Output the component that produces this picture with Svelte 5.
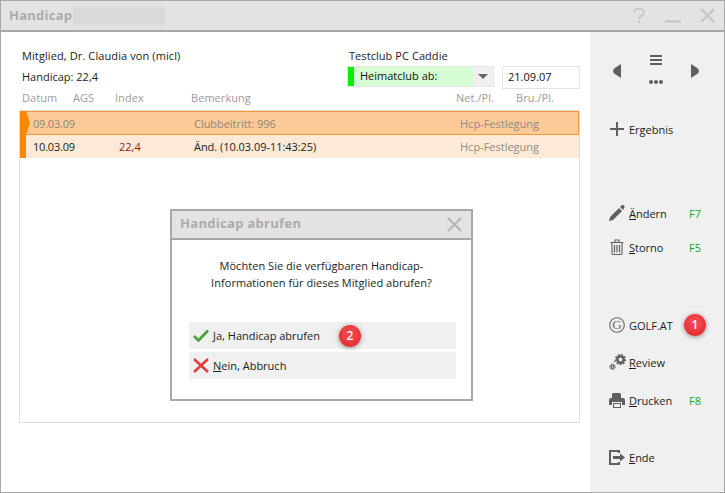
<script>
  const rows = [
    { date: '09.03.09', index: '', note: 'Clubbeitritt: 996', kind: 'Hcp-Festlegung', selected: true },
    { date: '10.03.09', index: '22,4', note: 'Änd. (10.03.09-11:43:25)', kind: 'Hcp-Festlegung', selected: false }
  ];
</script>

<div class="window">
  <header class="titlebar">
    <span class="title">Handicap</span>
    <span class="blur"></span>
    <span class="controls">
      <svg width="12" height="15" viewBox="0 0 12 15"><path d="M1 4.500C1 2.300 3 1 6 1s5 1.500 5 3.500c0 1.800-1 2.500-2.500 3.500C7 9 6 9.700 6 11.500" fill="none" stroke="#c4c4c4" stroke-width="1.700"/><rect x="4.900" y="12.800" width="2.300" height="2.200" fill="#c4c4c4"/></svg>
      <svg width="16" height="15" viewBox="0 0 16 15"><rect x="0" y="12.500" width="16" height="2" fill="#c4c4c4"/></svg>
      <svg width="15" height="15" viewBox="0 0 15 15"><path d="M1 1l13 13M14 1L1 14" stroke="#c4c4c4" stroke-width="2" fill="none"/></svg>
    </span>
  </header>

  <div class="body">
    <main class="content">
      <div class="info">
        <div class="member">
          <p class="name">Mitglied, Dr. Claudia von (micl)</p>
          <p>Handicap: 22,4</p>
        </div>
        <div class="club">
          <p class="club-name">Testclub PC Caddie</p>
          <div class="club-row">
            <div class="select">
              <span class="marker"></span>
              <span class="select-value">Heimatclub ab:</span>
              <span class="select-btn"><svg width="10" height="5" viewBox="0 0 10 5"><path d="M0 0h10L5 5z" fill="#666"/></svg></span>
            </div>
            <div class="date-input">21.09.07</div>
          </div>
        </div>
      </div>

      <div class="cols">
        <span class="c-date">Datum</span>
        <span class="c-ags">AGS</span>
        <span class="c-index">Index</span>
        <span class="c-note">Bemerkung</span>
        <span class="c-net">Net./Pl.</span>
        <span class="c-bru">Bru./Pl.</span>
      </div>

      <div class="table">
        {#each rows as r}
          <div class="row" class:selected={r.selected}>
            <span class="flag"></span>
            <span class="r-date">{r.date}</span>
            <span class="r-index">{r.index}</span>
            <span class="r-note">{r.note}</span>
            <span class="r-kind">{r.kind}</span>
          </div>
        {/each}
      </div>
    </main>

    <aside class="side">
      <div class="nav">
        <svg width="8" height="14" viewBox="0 0 8 14"><path d="M8 0v14L1 9.500 0 7l1-2.500z" fill="#5f5f5f"/></svg>
        <span class="menu">
          <svg width="12" height="10" viewBox="0 0 12 10"><path d="M0 0h12v2H0zM0 4h12v2H0zM0 8h12v2H0z" fill="#5f5f5f"/></svg>
          <svg width="14" height="4" viewBox="0 0 14 4"><circle cx="2" cy="2" r="2" fill="#5f5f5f"/><circle cx="7" cy="2" r="2" fill="#5f5f5f"/><circle cx="12" cy="2" r="2" fill="#5f5f5f"/></svg>
        </span>
        <svg width="8" height="14" viewBox="0 0 8 14"><path d="M0 0v14L7 9.500 8 7 7 4.500z" fill="#5f5f5f"/></svg>
      </div>

      <div class="action a-ergebnis">
        <span class="ico"><svg width="14" height="14" viewBox="0 0 14 14"><path d="M6 0h2v6h6v2H8v6H6V8H0V6h6z" fill="#5f5f5f"/></svg></span>
        <span class="lbl">Ergebnis</span>
      </div>

      <div class="action a-aendern">
        <span class="ico"><svg width="16" height="16" viewBox="0 0 16 16"><path d="M0 16l1-4L10 3l3 3-9 9zM11 2l1.500-1.500a1.500 1.500 0 0 1 2.500 2.500L14 5z" fill="#5f5f5f"/></svg></span>
        <span class="lbl"><u>Ä</u>ndern</span><span class="key">F7</span>
      </div>
      <div class="action a-storno">
        <span class="ico"><svg width="14" height="16" viewBox="0 0 14 16"><path d="M0.500 3.500h13M5 3V1h4v2M2 4v10.500l.8 1h8.400l.8-1V4" fill="none" stroke="#5f5f5f" stroke-width="1.100"/><path d="M4.500 6v7.500M7 6v7.500M9.500 6v7.500" fill="none" stroke="#5f5f5f" stroke-width="1.200"/></svg></span>
        <span class="lbl"><u>S</u>torno</span><span class="key">F5</span>
      </div>

      <div class="action a-golf">
        <span class="ico"><svg width="16" height="16" viewBox="0 0 16 16"><circle cx="8" cy="8" r="7.300" fill="none" stroke="#6a6a6a" stroke-width="1.100"/><text x="8" y="12" text-anchor="middle" class="g">G</text></svg></span>
        <span class="lbl">GOLF.AT</span>
        <span class="badge b1">1</span>
      </div>
      <div class="action a-review">
        <span class="ico"><svg width="17" height="16" viewBox="0 0 17 16"><circle cx="11.500" cy="5.500" r="3.200" fill="none" stroke="#5f5f5f" stroke-width="2.600"/><circle cx="11.500" cy="5.500" r="5" fill="none" stroke="#5f5f5f" stroke-width="1.400" stroke-dasharray="1.700 1.700"/><circle cx="3.500" cy="12.800" r="1.600" fill="none" stroke="#5f5f5f" stroke-width="1.400"/><circle cx="3.500" cy="12.800" r="2.800" fill="none" stroke="#5f5f5f" stroke-width="1" stroke-dasharray="1.100 1.100"/><circle cx="5.500" cy="7.500" r=".8" fill="#5f5f5f"/></svg></span>
        <span class="lbl"><u>R</u>eview</span>
      </div>
      <div class="action a-drucken">
        <span class="ico"><svg width="16" height="15" viewBox="0 0 16 15"><path d="M4 0h7l1 1v4H3V1zM2 5h12a2 2 0 0 1 2 2v5h-3V9H3v3H0V7a2 2 0 0 1 2-2zM4 10h8v5H4z" fill="#5f5f5f"/><rect x="5" y="11" width="6" height="3" fill="#f0f0f0"/></svg></span>
        <span class="lbl"><u>D</u>rucken</span><span class="key">F8</span>
      </div>
      <div class="action a-ende">
        <span class="ico"><svg width="16" height="15" viewBox="0 0 16 15"><path d="M10 3V1H1v13h9v-2" fill="none" stroke="#5f5f5f" stroke-width="2"/><path d="M4 6h7V3.500L16 7.500l-5 4V9H4z" fill="#5f5f5f"/></svg></span>
        <span class="lbl"><u>E</u>nde</span>
      </div>
    </aside>
  </div>

  <div class="dialog">
    <div class="dlg-title">
      <span>Handicap abrufen</span>
      <svg width="15" height="15" viewBox="0 0 15 15"><path d="M1 1l13 13M14 1L1 14" stroke="#b4b4b4" stroke-width="2" fill="none"/></svg>
    </div>
    <div class="dlg-body">
      <p class="question">Möchten Sie die verfügbaren Handicap-<br />Informationen für dieses Mitglied abrufen?</p>
      <div class="choice">
        <svg width="16" height="13" viewBox="0 0 16 13"><path d="M1 7l4.500 4.500L15 1.500" fill="none" stroke="#4a9e3a" stroke-width="2.600"/></svg>
        <span><u>J</u>a, Handicap abrufen</span>
        <span class="badge b2">2</span>
      </div>
      <div class="choice">
        <svg width="16" height="15" viewBox="0 0 16 15"><path d="M1 1l14 13M15 1L1 14" fill="none" stroke="#e23b3b" stroke-width="2.400"/></svg>
        <span><u>N</u>ein, Abbruch</span>
      </div>
    </div>
  </div>
</div>

<style>
  :global(body) { margin: 0; background: #fff; }
  p { margin: 0; }
  .window {
    position: relative;
    box-sizing: border-box;
    width: 725px;
    height: 493px;
    border: 1px solid #a8a8a8;
    font: 11px/15px "Open Sans", sans-serif;
    color: #1c1c1c;
    display: flex;
    flex-direction: column;
    overflow: hidden;
  }
  .titlebar {
    flex: none;
    box-sizing: border-box;
    height: 31px;
    background: #e3e3e3;
    border-bottom: 2px solid #a8a8a8;
    display: flex;
    align-items: center;
    padding-left: 8px;
  }
  .title { font-size: 13px; font-weight: 700; color: #ababab; letter-spacing: .25px; }
  .blur { width: 92px; height: 18px; margin-left: 1px; background: #d9d9d9; filter: blur(1px); }
  .controls { margin-left: auto; margin-right: 9px; display: flex; align-items: center; gap: 20px; }
  .controls svg:last-child { margin-left: -1px; }
  .body { flex: 1; display: flex; min-height: 0; }
  .content { width: 589px; box-sizing: border-box; padding: 16px 10px 0 18px; background: #fff; display: flex; flex-direction: column; }
  .info { display: flex; justify-content: space-between; height: 41px; }
  .member { padding: 0 0 0 3px; display: flex; flex-direction: column; gap: 6px; }
  .name { letter-spacing: .1px; }
  .club { width: 233px; }
  .club-name { padding-left: 2px; letter-spacing: .06px; }
  .club-row { display: flex; gap: 8px; margin-top: 3px; }
  .select { width: 147px; height: 21px; box-sizing: border-box; border: 1px solid #e6e6e6; display: flex; background: #d4fdd4; }
  .marker { width: 6px; background: #00f000; }
  .select-value { flex: 1; padding-left: 6px; line-height: 18px; color: #111; }
  .select-btn { width: 20px; background: #f0f0f0; display: flex; align-items: center; justify-content: center; }
  .date-input { width: 78px; height: 23px; box-sizing: border-box; border: 1px solid #e3e3e3; padding-left: 5px; line-height: 19px; color: #111; }
  .cols { position: relative; height: 15px; margin-top: 1px; color: #9c9c9c; letter-spacing: .05px; }
  .cols span { position: absolute; top: 0; }
  .c-date { left: 3px; }
  .c-ags { left: 54px; }
  .c-index { left: 96px; }
  .c-note { left: 172px; }
  .c-net { left: 437px; }
  .c-bru { left: 497px; }
  .table { flex: none; box-sizing: border-box; height: 313px; margin-top: 5px; border: 1px solid #e0e0e0; }
  .row { position: relative; display: flex; align-items: center; height: 23px; background: #fdead6; color: #1c1c1c; }
  .row.selected { height: 24px; background: #fcca96; border: 1px solid #f59a32; border-left: 0; box-sizing: border-box; color: #8f8679; }
  .flag { width: 6px; align-self: stretch; background: #f98a00; }
  .selected .flag { width: 10px; clip-path: polygon(0 0, 60% 0, 100% 50%, 60% 100%, 0 100%); margin: -1px 0; }
  .r-date { position: absolute; left: 13px; letter-spacing: -.2px; }
  .r-index { position: absolute; left: 99px; color: #8c1c1c; }
  .r-note { position: absolute; left: 174px; letter-spacing: -.04px; }
  .r-kind { position: absolute; left: 440px; color: #8c8c8c; }
  .side { flex: 1; background: #f0f0f0; position: relative; display: flex; flex-direction: column; }
  .nav { display: flex; align-items: center; justify-content: space-between; padding: 0 25px 0 23px; margin-top: 20px; height: 38px; }
  .menu { display: flex; flex-direction: column; align-items: center; gap: 15px; margin-top: -3px; }
  .action { display: flex; align-items: center; height: 20px; position: relative; color: #1c1c1c; }
  .ico { display: flex; justify-content: center; padding-left: 15px; box-sizing: border-box; width: 39px; flex: none; }
  .lbl { width: 60px; }
  .key { color: #16a816; }
  .a-ergebnis { margin-top: 29px; }
  .a-aendern { margin-top: 64px; }
  .a-storno { margin-top: 14px; }
  .a-golf { margin-top: 58px; }
  .a-review { margin-top: 17px; }
  .a-drucken { margin-top: 18px; }
  .a-ende { margin-top: 37px; }
  .g { font: 13px "Liberation Serif", serif; fill: #6a6a6a; }
  .badge {
    position: absolute;
    width: 22px; height: 22px;
    border-radius: 50%;
    background: radial-gradient(circle at 50% 40%, #f0454a 30%, #dc1f24);
    box-shadow: 0 1px 5px rgba(0,0,0,.4);
    color: #fff;
    font-weight: 600;
    font-size: 12px;
    line-height: 22px;
    text-align: center;
  }
  .b1 { left: 94px; top: -1px; }
  .b2 { left: 150px; top: 3px; }
  .dialog {
    position: absolute;
    left: 169px; top: 208px;
    width: 303px; height: 192px;
    box-sizing: border-box;
    border: 2px solid #a8a8a8;
    background: #fff;
    display: flex; flex-direction: column;
  }
  .dlg-title {
    flex: none; box-sizing: border-box;
    height: 29px;
    background: #e3e3e3;
    border-bottom: 2px solid #a8a8a8;
    display: flex; align-items: center; justify-content: space-between;
    padding: 0 9px 0 8px;
    font-size: 13px; font-weight: 700; color: #ababab; letter-spacing: .3px;
  }
  .dlg-title span { margin-top: -2px; }
  .dlg-body { padding: 0 15px 0 17px; }
  .question { text-align: center; line-height: 17px; margin: 17px 0 0 -2px; color: #1c1c1c; letter-spacing: .04px; }
  .choice { position: relative; box-sizing: border-box; display: flex; align-items: center; gap: 4px; height: 27px; background: #f0f0f0; padding: 0 0 1px 4px; margin-bottom: 3px; }
  .question + .choice { margin-top: 31px; }
</style>
